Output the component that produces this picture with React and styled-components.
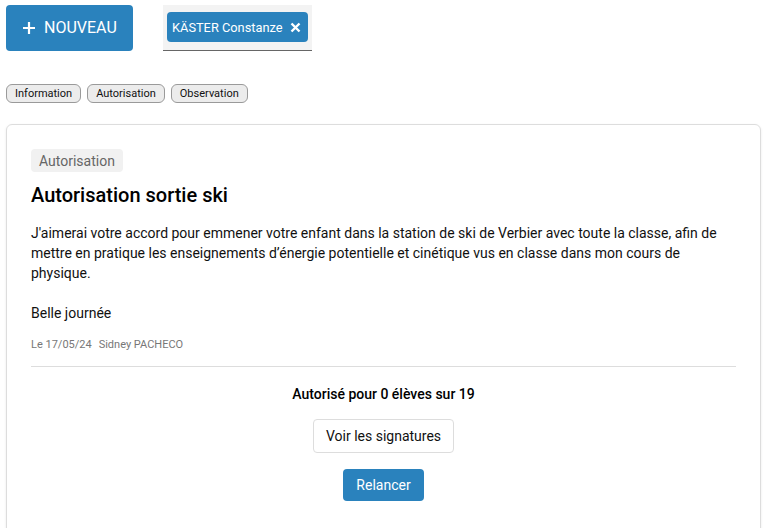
import React from "react";
import styled, { createGlobalStyle } from "styled-components";

const GlobalStyle = createGlobalStyle`
  body {
    margin: 0;
    background: #fff;
    font-family: Roboto, "Liberation Sans", sans-serif;
    color: #111;
  }
`;

const Page = styled.div`
  padding: 5px 6px 0 6px;
`;

const TopBar = styled.div`
  display: flex;
  align-items: flex-start;
  gap: 30px;
`;

const NewButton = styled.button`
  display: flex;
  align-items: center;
  gap: 8px;
  height: 46px;
  width: 127px;
  padding: 0 0 1px 16px;
  border: none;
  border-radius: 4px;
  background: #2a82bd;
  color: #fff;
  font-family: inherit;
  font-size: 16px;
  text-transform: uppercase;
  cursor: pointer;
`;

const TabBox = styled.div`
  height: 45px;
  width: 149px;
  background: #f3f3f3;
  border-bottom: 1px solid #666;
  display: flex;
  align-items: center;
  justify-content: center;
`;

const Chip = styled.div`
  display: flex;
  align-items: center;
  gap: 7px;
  height: 30px;
  width: 141px;
  box-sizing: border-box;
  padding: 1px 0 0 5px;
  margin-top: -2px;
  background: #2a82bd;
  color: #fff;
  border-radius: 4px;
  font-size: 12.8px;
`;

const Filters = styled.div`
  display: flex;
  gap: 6px;
  margin-top: 33px;
`;

const Filter = styled.button`
  height: 19px;
  padding: 0 8px;
  border: 1px solid #9a9a9a;
  border-radius: 6px;
  background: #ececec;
  font-family: inherit;
  font-size: 11px;
  color: #111;
`;

const Card = styled.div`
  margin-top: 21px;
  width: 755px;
  box-sizing: border-box;
  border: 1px solid #ddd;
  border-radius: 6px;
  box-shadow: 0 1px 3px rgba(0, 0, 0, 0.08);
  padding: 24px 24px 40px;
`;

const Tag = styled.span`
  display: inline-block;
  padding: 4px 8px 2px;
  background: #f1f1f1;
  color: #666;
  border-radius: 4px;
  font-size: 14px;
  line-height: 17px;
`;

const Title = styled.h2`
  margin: 11px 0 0;
  font-size: 20px;
  font-weight: 500;
  line-height: 24px;
  color: #000;
`;

const Body = styled.p`
  margin: ${(p) => p.$top || 0}px 0 0;
  font-size: 14px;
  line-height: 20px;
  color: #111;
`;

const Meta = styled.div`
  margin-top: 15px;
  display: flex;
  gap: 7px;
  font-size: 11px;
  line-height: 13px;
  color: #777;
`;

const Divider = styled.hr`
  margin: 15px 0 0;
  border: none;
  border-top: 1px solid #ddd;
`;

const Footer = styled.div`
  display: flex;
  flex-direction: column;
  align-items: center;
`;

const Summary = styled.div`
  margin-top: 19px;
  font-size: 14px;
  font-weight: 500;
  color: #000;
`;

const OutlineButton = styled.button`
  margin-top: 17px;
  height: 34px;
  padding: 0 12px;
  border: 1px solid #ddd;
  border-radius: 4px;
  background: #fff;
  font-family: inherit;
  font-size: 14px;
  color: #111;
`;

const PrimaryButton = styled.button`
  margin-top: 16px;
  height: 32px;
  padding: 0 13px;
  border: none;
  border-radius: 4px;
  background: #2a82bd;
  color: #fff;
  font-family: inherit;
  font-size: 14px;
`;

const Plus = () => (
  <svg width="14" height="14" viewBox="0 0 14 14">
    <path d="M7 1v12M1 7h12" stroke="#fff" strokeWidth="2.2" />
  </svg>
);

const Cross = () => (
  <svg width="11" height="11" viewBox="0 0 11 11">
    <path d="M1.5 1.5l8 8M9.5 1.5l-8 8" stroke="#fff" strokeWidth="2.4" />
  </svg>
);

export default function App() {
  return (
    <Page>
      <GlobalStyle />
      <TopBar>
        <NewButton>
          <Plus />
          Nouveau
        </NewButton>
        <TabBox>
          <Chip>
            KÄSTER Constanze
            <Cross />
          </Chip>
        </TabBox>
      </TopBar>
      <Filters>
        <Filter>Information</Filter>
        <Filter>Autorisation</Filter>
        <Filter>Observation</Filter>
      </Filters>
      <Card>
        <Tag>Autorisation</Tag>
        <Title>Autorisation sortie ski</Title>
        <Body $top={16}>
          J'aimerai votre accord pour emmener votre enfant dans la station de ski de Verbier avec toute la classe, afin de
          mettre en pratique les enseignements d’énergie potentielle et cinétique vus en classe dans mon cours de
          physique.
        </Body>
        <Body $top={20}>Belle journée</Body>
        <Meta>
          <span>Le 17/05/24</span>
          <span>Sidney PACHECO</span>
        </Meta>
        <Divider />
        <Footer>
          <Summary>Autorisé pour 0 élèves sur 19</Summary>
          <OutlineButton>Voir les signatures</OutlineButton>
          <PrimaryButton>Relancer</PrimaryButton>
        </Footer>
      </Card>
    </Page>
  );
}
